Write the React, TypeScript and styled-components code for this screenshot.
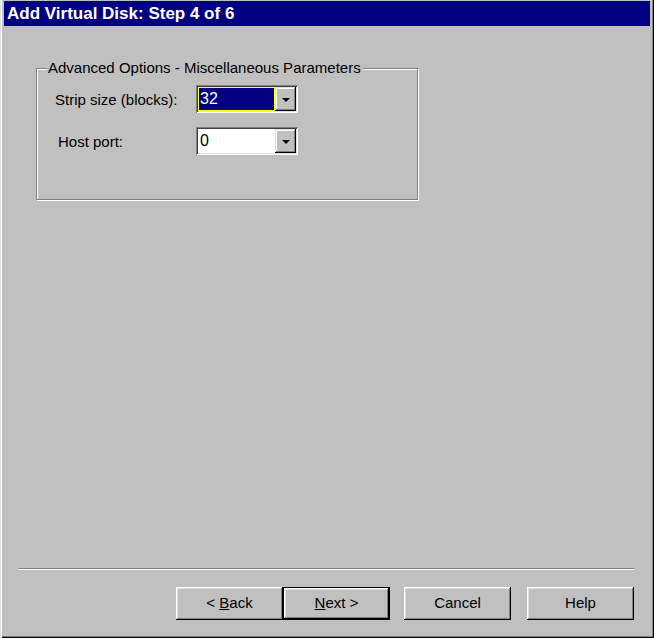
import React from "react";
import styled, { createGlobalStyle } from "styled-components";

const Global = createGlobalStyle`
  html, body { margin: 0; padding: 0; background: #c0c0c0; }
  * { box-sizing: border-box; }
`;

const Window = styled.div`
  width: 654px;
  height: 638px;
  background: #c0c0c0;
  display: flex;
  flex-direction: column;
  padding: 1px 4px 4px 4px;
  font-family: "Liberation Sans", Arial, sans-serif;
  font-size: 15px;
  color: #000;
  box-shadow: inset 1px 0 #dfdfdf, inset 2px 0 #fff, inset -1px -1px #000,
    inset -2px -2px #808080;
`;

const TitleBar = styled.div`
  height: 25px;
  background: #000080;
  color: #fff;
  font-weight: bold;
  font-size: 17px;
  display: flex;
  align-items: center;
  padding-left: 3px;
`;

const Content = styled.div`
  flex: 1;
  display: flex;
  flex-direction: column;
  padding: 42px 0 0 32px;
`;

const Group = styled.div`
  position: relative;
  width: 382px;
  height: 132px;
  border: 1px solid #808080;
  box-shadow: inset 1px 1px #fff, 1px 1px #fff;
  padding: 16px 0 0 18px;
  display: grid;
  grid-template-columns: 141px 102px;
  grid-auto-rows: 28px;
  row-gap: 14px;
  align-content: start;
`;

const Legend = styled.span`
  position: absolute;
  top: -9px;
  left: 10px;
  padding: 0 2px 0 1px;
  background: #c0c0c0;
  line-height: 16px;
  white-space: nowrap;
`;

const Label = styled.label<{ $indent?: number }>`
  display: flex;
  align-items: center;
  padding-left: ${(p) => p.$indent ?? 0}px;
  white-space: nowrap;
`;

const Combo = styled.div`
  display: flex;
  height: 28px;
  padding: 2px;
  background: #fff;
  box-shadow: inset 1px 1px #808080, inset -1px -1px #fff,
    inset 2px 2px #404040, inset -2px -2px #dfdfdf;
`;

const Field = styled.div<{ $selected?: boolean }>`
  flex: 1;
  margin: 1px;
  display: flex;
  align-items: center;
  padding-left: 1px;
  background: ${(p) => (p.$selected ? "#000080" : "#fff")};
  color: ${(p) => (p.$selected ? "#fff" : "#000")};
  outline: ${(p) => (p.$selected ? "1px dotted #ffff00" : "none")};
  font-size: 16px;
`;

const DropButton = styled.div`
  width: 21px;
  background: #c0c0c0;
  display: flex;
  align-items: center;
  justify-content: center;
  box-shadow: inset -1px -1px #000, inset 1px 1px #dfdfdf,
    inset -2px -2px #808080, inset 2px 2px #fff;
`;

const Arrow = styled.span`
  width: 0;
  height: 0;
  border-left: 4px solid transparent;
  border-right: 4px solid transparent;
  border-top: 4px solid #000;
  margin-top: 1px;
`;

const Spacer = styled.div`
  flex: 1;
`;

const Separator = styled.div`
  height: 2px;
  margin: 0 16px 0 15px;
  border-top: 1px solid #808080;
  border-bottom: 1px solid #fff;
`;

const ButtonRow = styled.div`
  display: flex;
  justify-content: flex-end;
  padding-right: 16px;
  margin: 17px 0 14px;
`;

const Button = styled.button<{ $default?: boolean; $gap?: number }>`
  width: 107px;
  height: 33px;
  margin-left: ${(p) => p.$gap ?? 0}px;
  background: #c0c0c0;
  font-family: "Liberation Sans", Arial, sans-serif;
  font-size: 15px;
  color: #000;
  padding: 0 0 2px;
  border: ${(p) => (p.$default ? "1px solid #000" : "none")};
  box-shadow: inset -1px -1px #000, inset 1px 1px #fff,
    inset -2px -2px #808080, inset 2px 2px #dfdfdf;
  cursor: default;
`;

const Key = styled.span`
  text-decoration: underline;
`;

function ComboBox({ value, selected }: { value: string; selected?: boolean }) {
  return (
    <Combo>
      <Field $selected={selected}>{value}</Field>
      <DropButton>
        <Arrow />
      </DropButton>
    </Combo>
  );
}

export default function App() {
  return (
    <>
      <Global />
      <Window>
        <TitleBar>Add Virtual Disk: Step 4 of 6</TitleBar>
        <Content>
          <Group>
            <Legend>Advanced Options - Miscellaneous Parameters</Legend>
            <Label>Strip size (blocks):</Label>
            <ComboBox value="32" selected />
            <Label $indent={3}>Host port:</Label>
            <ComboBox value="0" />
          </Group>
          <Spacer />
        </Content>
        <Separator />
        <ButtonRow>
          <Button>
            &lt; <Key>B</Key>ack
          </Button>
          <Button $default>
            <Key>N</Key>ext &gt;
          </Button>
          <Button $gap={14}>Cancel</Button>
          <Button $gap={16}>Help</Button>
        </ButtonRow>
      </Window>
    </>
  );
}
